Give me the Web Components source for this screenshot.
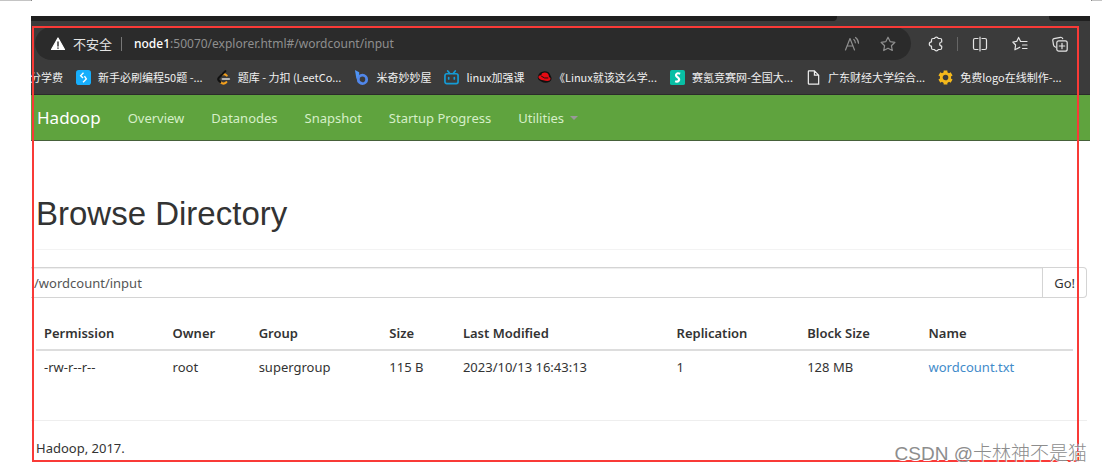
<!DOCTYPE html>
<html lang="zh-CN">
<head>
<meta charset="utf-8">
<title>Browsing HDFS</title>
<style>
  body {
    margin: 0;
    background: #fff;
    color: #333;
    font-family: "Noto Sans", "Noto Sans CJK SC", sans-serif;
    font-size: 13px;
    line-height: 20px;
  }
</style>
</head>
<body>
<capture-page>
  <browser-tabs></browser-tabs>
  <browser-toolbar host="node1" path=":50070/explorer.html#/wordcount/input"></browser-toolbar>
  <bookmark-bar></bookmark-bar>
  <site-nav></site-nav>
  <directory-view></directory-view>
  <site-footer>Hadoop, 2017.</site-footer>
  <span slot="mark">CSDN @卡林神不是猫</span>
</capture-page>

<script>
class CapturePage extends HTMLElement {
  constructor() {
    super();
    this.attachShadow({ mode: 'open' });
    this.shadowRoot.innerHTML = `
      <style>
        :host {
          display: block;
        }

        .edges {
          display: flex;
          justify-content: space-between;
          height: 1px;
          margin-bottom: 15px;
        }

        .edges i {
          width: 31px;
          background: #c4c4c4;
          border-right: 1px solid #888;
        }

        .edges i:last-child {
          width: 10px;
          border-right: 0;
          border-left: 1px solid #888;
        }

        .window {
          position: relative;
          margin: 0 12px 0 31px;
        }

        /* red marker drawn over the window */
        .marker {
          position: absolute;
          inset: 10px 11px 0 1px;
          border: 2px solid #f93a37;
          pointer-events: none;
        }

        .mark {
          position: absolute;
          right: 3px;
          bottom: -6px;
          color: #8d8d8d;
          font: 300 19px/28px "Liberation Sans", "Noto Sans CJK SC", sans-serif;
          text-shadow: 1px 1px 0 #fff;
          white-space: nowrap;
        }
      </style>
      <div class="edges"><i></i><i></i></div>
      <div class="window">
        <slot></slot>
        <div class="marker"></div>
        <div class="mark"><slot name="mark"></slot></div>
      </div>
    `;
  }
}

class BrowserTabs extends HTMLElement {
  constructor() {
    super();
    this.attachShadow({ mode: 'open' });
    this.shadowRoot.innerHTML = `
      <style>
        :host {
          display: flex;
          height: 5px;
          background: #3b3b3b;
        }

        .rest {
          flex: 1;
          background: #1f1f1f;
          border-radius: 0 0 4px 0;
        }

        .active {
          width: 212px;
        }

        .end {
          width: 41px;
          background: #1f1f1f;
          border-radius: 0 0 0 4px;
        }
      </style>
      <div class="rest"></div>
      <div class="active"></div>
      <div class="end"></div>
    `;
  }
}

class BrowserToolbar extends HTMLElement {
  constructor() {
    super();
    this.attachShadow({ mode: 'open' });
    this.render();
  }

  render() {
    const host = this.getAttribute('host') || '';
    const path = this.getAttribute('path') || '';

    this.shadowRoot.innerHTML = `
      <style>
        :host {
          display: flex;
          align-items: center;
          padding: 6px 22px 0 4px;
          background: #3b3b3b;
          color: #e4e4e4;
        }

        .address {
          flex: 1;
          display: flex;
          align-items: center;
          box-sizing: border-box;
          height: 33px;
          padding: 0 15px;
          border-radius: 17px;
          background: #2b2b2b;
        }

        .state {
          margin-left: 7px;
        }

        .bar {
          width: 1px;
          height: 14px;
          margin: 0 12px 0 9px;
          background: #777;
        }

        .url {
          flex: 1;
          color: #8f8f8f;
          font-size: 12px;
          white-space: nowrap;
        }

        .url b {
          color: #fff;
          font-weight: 500;
        }

        button {
          display: flex;
          padding: 0;
          border: 0;
          background: none;
          color: inherit;
        }

        svg {
          display: block;
          fill: none;
          stroke: currentColor;
          stroke-width: 1.2;
          stroke-linejoin: round;
          stroke-linecap: round;
        }

        .inside {
          display: flex;
          gap: 20px;
          color: #8f8f8f;
        }

        .tools {
          display: flex;
          align-items: center;
          margin-left: 17px;
        }

        .tools i {
          width: 1px;
          height: 14px;
          margin: 0 14px 0 13px;
          background: #666;
        }

        .actions {
          display: flex;
          gap: 24px;
        }
      </style>
      <div class="address">
        <svg width="16" height="16" viewBox="0 0 16 16" aria-hidden="true">
          <path d="M8 2 L14.5 13.5 H1.5 Z" fill="#fff" stroke="#fff"/>
          <path d="M8 6v4M8 12v.2" stroke="#2b2b2b" stroke-width="1.4"/>
        </svg>
        <span class="state">不安全</span>
        <span class="bar"></span>
        <span class="url"><b>${host}</b>${path}</span>
        <div class="inside">
          <button type="button" aria-label="Read aloud">
            <svg width="16" height="16" viewBox="0 0 16 16"><path d="M1.5 14 L6 2.500 L10.500 14 M3.200 10 H8.800 M9.800 3.500 Q11.300 4.800 11.300 6.800 M11.500 1.500 Q14.500 3.800 14.500 7.200"/></svg>
          </button>
          <button type="button" aria-label="Add to favorites">
            <svg width="16" height="16" viewBox="0 0 16 16"><path d="M8 1.200 L10.100 5.600 L14.900 6.300 L11.400 9.700 L12.300 14.500 L8 12.200 L3.700 14.500 L4.600 9.700 L1.100 6.300 L5.900 5.600 Z"/></svg>
          </button>
        </div>
      </div>
      <div class="tools">
        <button type="button" aria-label="Extensions">
          <svg width="16" height="16" viewBox="0 0 16 16"><path d="M5 2.500 H6.500 A2 2 0 0 1 10.300 2.500 H12.200 Q13.700 2.500 13.700 4 V6 A2 2 0 0 0 13.700 10 V12 Q13.700 13.500 12.200 13.500 H10.300 A2 2 0 0 1 6.500 13.500 H5 Q3.500 13.500 3.500 12 V10.200 A2.200 2.200 0 0 1 3.500 5.800 V4 Q3.500 2.500 5 2.500 Z"/></svg>
        </button>
        <i></i>
        <div class="actions">
          <button type="button" aria-label="Split screen">
            <svg width="16" height="16" viewBox="0 0 16 16"><path d="M6 2.500 H3 Q1.500 2.500 1.500 4 V12 Q1.500 13.500 3 13.500 H6 M10 2.500 H13 Q14.500 2.500 14.500 4 V12 Q14.500 13.500 13 13.500 H10 M8 1 V15"/></svg>
          </button>
          <button type="button" aria-label="Favorites">
            <svg width="16" height="16" viewBox="0 0 16 16"><path d="M9.200 5.500 H15 M10.500 9 H15 M10.500 12.500 H15 M8.600 5.400 L6.600 1.400 L4.700 5.400 L.8 6 L3.600 9 L2.900 13.800 L7.800 11.200"/></svg>
          </button>
          <button type="button" aria-label="Collections">
            <svg width="16" height="16" viewBox="0 0 16 16"><path d="M3.800 11.200 Q1.800 10.500 1.500 8.800 L.8 4.500 Q.6 3 2 2.600 L8.500 1.300 Q10 1 10.700 2.700"/><rect x="4.800" y="4.800" width="10.400" height="10.400" rx="2"/><path d="M10 7.300 V12.700 M7.300 10 H12.700"/></svg>
          </button>
        </div>
      </div>
    `;
  }
}

const bookmarks = [
  ['新手必刷编程50题 -...', '<rect width="16" height="16" rx="3" fill="#17aefc"/><path d="M8 3 L5 6 L7.500 8.500 M7.500 13 L11 9.500 L9 6.500" fill="none" stroke="#fff" stroke-width="1.500"/>'],
  ['题库 - 力扣 (LeetCo...', '<g fill="none" stroke-width="2.200" stroke-linecap="round"><path d="M5 13 Q8 16 11 13" stroke="#f5a01c"/><path d="M6.500 5 Q9 3.500 11.500 6" stroke="#f5a01c"/><path d="M10 1.200 L2.800 8.500 Q1.800 10 3 11.300 L4.500 12.800" stroke="#111"/><path d="M7 9.500 H14" stroke="#b3b3b3"/></g>'],
  ['米奇妙妙屋', '<path d="M1 0 L5.500 2.500 V11 L2.500 9Z" fill="#4e94f5"/><circle cx="9" cy="10" r="4.500" fill="none" stroke="#5187ea" stroke-width="3"/>'],
  ['linux加强课', '<g fill="none" stroke="#159bd5" stroke-width="1.800" stroke-linecap="round"><rect x="1" y="4" width="14" height="10.500" rx="2"/><path d="M4 1 L6 3.500 M12 1 L10 3.500 M5 8 V9.500 M11 8 V9.500"/></g>'],
  ['《Linux就该这么学...', '<path d="M1 7 Q2 2 7 1.500 Q13 1 14.500 6 Q17 10 13.500 12.500 Q9 15 4 12 Q0 10 1 7Z" fill="#101010"/><path d="M1.500 7 Q1 10 6.500 11 Q14 13 14.500 9.500 Q14.500 8 12.800 7.500 Q12.500 3.500 10 3 Q8 2.500 7 3 Q5 3 4.500 5.500 Q2.500 5.500 1.500 7Z" fill="#e80b13"/><path d="M4.500 6.500 Q8 9.500 12 8.500" fill="none" stroke="#101010"/>'],
  ['赛氪竞赛网-全国大...', '<rect width="16" height="16" rx="2" fill="#08bea4"/><path d="M10.800 4 Q7.500 2.500 6.500 5 Q6 6.500 8.500 8 Q10.500 9.500 9.300 11.500 Q8 13 5.500 12" fill="none" stroke="#fff" stroke-width="2.300"/>'],
  ['广东财经大学综合...', '<path d="M3 1 H9 L13.500 5.500 V15 H3 Q2.500 15 2.500 14.500 V1.500 Q2.500 1 3 1Z M9 1 V5.500 H13.500" fill="none" stroke="#eee" stroke-width="1.300"/>'],
  ['免费logo在线制作-...', '<circle cx="8" cy="8" r="4.500" fill="none" stroke="#f5b91c" stroke-width="3"/><path d="M8 .5 V3.500 M8 12.500 V15.500 M1.500 4.200 L4 5.700 M12 10.300 L14.500 11.800 M1.500 11.800 L4 10.300 M12 5.700 L14.500 4.200" stroke="#f5b91c" stroke-width="4"/>']
];

class BookmarkBar extends HTMLElement {
  constructor() {
    super();
    this.attachShadow({ mode: 'open' });
    const items = bookmarks.map(([label, icon]) => `
      <a href="#"><svg width="15" height="15" viewBox="0 0 16 16" aria-hidden="true">${icon}</svg><span>${label}</span></a>
    `).join('');

    this.shadowRoot.innerHTML = `
      <style>
        :host {
          display: flex;
          align-items: center;
          gap: 13px;
          height: 34px;
          overflow: hidden;
          background: #3b3b3b;
          border-bottom: 1px solid #2b2b2b;
          font-family: "Noto Sans CJK SC", sans-serif;
          font-size: 11px;
          line-height: 16px;
          text-spacing-trim: trim-start;
        }

        a {
          display: flex;
          align-items: center;
          gap: 7px;
          color: #f0f0f0;
          text-decoration: none;
          white-space: nowrap;
        }

        /* first bookmark is scrolled partly out of the bar */
        .cut {
          justify-content: flex-end;
          width: 32px;
          overflow: hidden;
        }
      </style>
      <a class="cut" href="#">分学费</a>
      ${items}
    `;
  }
}

class SiteNav extends HTMLElement {
  constructor() {
    super();
    this.attachShadow({ mode: 'open' });
    this.shadowRoot.innerHTML = `
      <style>
        :host {
          display: block;
          background: #5fa33e;
          border-bottom: 1px solid #46613a;
        }

        nav {
          display: flex;
          align-items: center;
          gap: 27px;
          height: 45px;
          padding-left: 6px;
        }

        a {
          display: flex;
          align-items: center;
          gap: 6px;
          color: #d6efc8;
          text-decoration: none;
        }

        .brand {
          color: #fff;
          font-size: 17px;
        }

        .caret {
          border: 4px solid transparent;
          border-top-color: #999;
          border-bottom: 0;
        }
      </style>
      <nav>
        <a class="brand" href="#">Hadoop</a>
        <a href="#">Overview</a>
        <a href="#">Datanodes</a>
        <a href="#">Snapshot</a>
        <a href="#">Startup Progress</a>
        <a href="#">Utilities <span class="caret"></span></a>
      </nav>
    `;
  }
}

class DirectoryView extends HTMLElement {
  constructor() {
    super();
    this.attachShadow({ mode: 'open' });
    this.shadowRoot.innerHTML = `
      <style>
        :host {
          display: block;
          padding-top: 54px;
        }

        h1 {
          margin: 0 17px 0 5px;
          padding-bottom: 16px;
          border-bottom: 1px solid #f3f3f3;
          font: 400 33px/38px "Liberation Sans", sans-serif;
        }

        form {
          display: flex;
          margin: 17px 3px 17px 0;
        }

        input {
          flex: 1;
          min-width: 0;
          box-sizing: border-box;
          height: 31px;
          padding: 0 3px;
          border: 1px solid #d4d4d4;
          border-left: 0;
          box-shadow: inset 0 1px 1px #eee;
          color: #555;
          font: inherit;
        }

        button {
          padding: 0 11px;
          border: 1px solid #d4d4d4;
          border-left: 0;
          border-radius: 0 4px 4px 0;
          background: #fff;
          color: #333;
          font: inherit;
        }

        .files {
          margin: 0 17px 0 5px;
        }

        table {
          width: 100%;
          table-layout: fixed;
          border-collapse: collapse;
        }

        th, td {
          padding: 8px 8px 6px;
          text-align: left;
          white-space: nowrap;
        }

        th {
          border-bottom: 2px solid #ddd;
          font-size: 13px;
          font-weight: 600;
        }

        td {
          padding: 6px 8px 8px;
        }

        td a {
          color: #428bca;
          text-decoration: none;
        }
      </style>
      <h1>Browse Directory</h1>
      <form onsubmit="return false">
        <input type="text" value="/wordcount/input" aria-label="Directory">
        <button type="submit">Go!</button>
      </form>
      <div class="files">
        <table>
          <colgroup>
            <col style="width: 12.4%">
            <col style="width: 8.3%">
            <col style="width: 12.6%">
            <col style="width: 7.1%">
            <col style="width: 20.6%">
            <col style="width: 12.6%">
            <col style="width: 11.7%">
            <col>
          </colgroup>
          <thead>
            <tr>
              <th>Permission</th>
              <th>Owner</th>
              <th>Group</th>
              <th>Size</th>
              <th>Last Modified</th>
              <th>Replication</th>
              <th>Block Size</th>
              <th>Name</th>
            </tr>
          </thead>
          <tbody>
            <tr>
              <td>-rw-r--r--</td>
              <td>root</td>
              <td>supergroup</td>
              <td>115 B</td>
              <td>2023/10/13 16:43:13</td>
              <td>1</td>
              <td>128 MB</td>
              <td><a href="#">wordcount.txt</a></td>
            </tr>
          </tbody>
        </table>
      </div>
    `;
  }
}

class SiteFooter extends HTMLElement {
  constructor() {
    super();
    this.attachShadow({ mode: 'open' });
    this.shadowRoot.innerHTML = `
      <style>
        :host {
          display: block;
          margin: 35px 3px 0 0;
          padding: 17px 5px 4px;
          border-top: 1px solid #eee;
        }
      </style>
      <slot></slot>
    `;
  }
}

customElements.define('capture-page', CapturePage);
customElements.define('browser-tabs', BrowserTabs);
customElements.define('browser-toolbar', BrowserToolbar);
customElements.define('bookmark-bar', BookmarkBar);
customElements.define('site-nav', SiteNav);
customElements.define('directory-view', DirectoryView);
customElements.define('site-footer', SiteFooter);
</script>
</body>
</html>
